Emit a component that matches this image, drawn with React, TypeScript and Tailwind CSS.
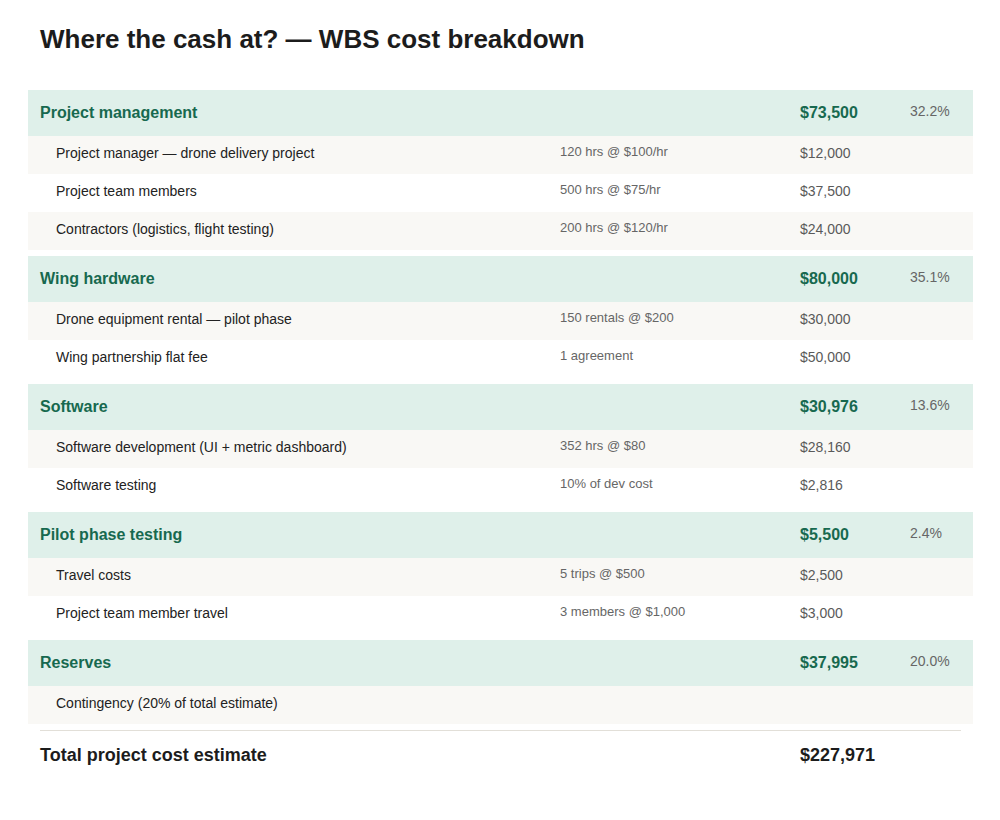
const sections = [
  {
    name: "Project management",
    total: "$73,500",
    pct: "32.2%",
    items: [
      ["Project manager — drone delivery project", "120 hrs @ $100/hr", "$12,000"],
      ["Project team members", "500 hrs @ $75/hr", "$37,500"],
      ["Contractors (logistics, flight testing)", "200 hrs @ $120/hr", "$24,000"],
    ],
  },
  {
    name: "Wing hardware",
    total: "$80,000",
    pct: "35.1%",
    items: [
      ["Drone equipment rental — pilot phase", "150 rentals @ $200", "$30,000"],
      ["Wing partnership flat fee", "1 agreement", "$50,000"],
    ],
  },
  {
    name: "Software",
    total: "$30,976",
    pct: "13.6%",
    items: [
      ["Software development (UI + metric dashboard)", "352 hrs @ $80", "$28,160"],
      ["Software testing", "10% of dev cost", "$2,816"],
    ],
  },
  {
    name: "Pilot phase testing",
    total: "$5,500",
    pct: "2.4%",
    items: [
      ["Travel costs", "5 trips @ $500", "$2,500"],
      ["Project team member travel", "3 members @ $1,000", "$3,000"],
    ],
  },
  {
    name: "Reserves",
    total: "$37,995",
    pct: "20.0%",
    items: [["Contingency (20% of total estimate)", "", ""]],
  },
];

export default function App() {
  return (
    <div className="min-h-[820px] bg-white pl-[28px] pr-[27px] pt-[24px] font-['Liberation_Sans',Arial,sans-serif]">
      <h1 className="px-3 text-[26px] font-bold leading-[30px] text-[#1c1c1c]">
        Where the cash at? — WBS cost breakdown
      </h1>
      <div className="mt-[36px]">
        {sections.map((s) => (
          <div key={s.name} className="mb-[6px]">
            <div className="grid h-[46px] grid-cols-[532px_240px_110px_1fr] items-center bg-[#dff0ea]">
              <div className="pl-3 text-[16px] font-bold text-[#17694f]">{s.name}</div>
              <div />
              <div className="text-[16px] font-bold text-[#17694f]">{s.total}</div>
              <div className="pb-[3px] text-[14px] text-[#666]">{s.pct}</div>
            </div>
            {s.items.map((it, i) => (
              <div
                key={it[0]}
                className={`grid h-[38px] grid-cols-[532px_240px_110px_1fr] items-center pb-[4px] ${
                  i % 2 === 0 ? "bg-[#f9f8f5]" : "bg-white"
                }`}
              >
                <div className="pl-[28px] text-[14px] text-[#222]">{it[0]}</div>
                <div className="pb-[2px] text-[13px] text-[#666]">{it[1]}</div>
                <div className="text-[14px] text-[#5a5a5a]">{it[2]}</div>
                <div />
              </div>
            ))}
          </div>
        ))}
      </div>
      <div className="mx-3 grid h-[50px] grid-cols-[520px_240px_1fr] items-center border-t border-[#e2dfd8]">
        <div className="text-[18px] font-bold text-[#1c1c1c]">Total project cost estimate</div>
        <div />
        <div className="text-[18px] font-bold text-[#1c1c1c]">$227,971</div>
      </div>
    </div>
  );
}
